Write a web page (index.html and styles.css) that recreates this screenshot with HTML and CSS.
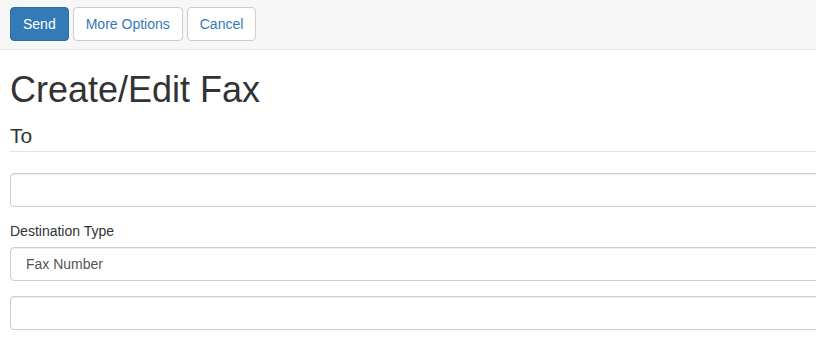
FILE: index.html
```html
<!DOCTYPE html>
<html lang="en">
<head>
    <meta charset="UTF-8">
    <meta name="viewport" content="width=device-width, initial-scale=1.0">
    <title>Create/Edit Fax</title>
    <link rel="stylesheet" href="styles.css">
</head>
<body>
    <div class="toolbar">
        <button class="btn btn-primary">Send</button>
        <button class="btn btn-default">More Options</button>
        <button class="btn btn-default">Cancel</button>
    </div>
    <div class="content">
        <h1>Create/Edit Fax</h1>
        <form class="fax-form">
            <fieldset>
                <legend>To</legend>
                <div class="form-group">
                    <input type="text" class="form-control" aria-label="Recipient">
                </div>
                <div class="form-group">
                    <label for="destType">Destination Type</label>
                    <select id="destType" class="form-control">
                        <option>Fax Number</option>
                    </select>
                </div>
                <div class="form-group">
                    <input type="text" class="form-control" aria-label="Fax number">
                </div>
            </fieldset>
        </form>
    </div>
</body>
</html>
```

FILE: styles.css
```css
html, body {
    overflow: hidden;
}
body {
    margin: 0;
    font-family: "Liberation Sans", Arial, sans-serif;
    font-size: 14px;
    line-height: 1.42857;
    color: #333;
    background-color: #fff;
}
.toolbar {
    display: flex;
    gap: 4px;
    padding: 7px 10px 8px;
    background-color: #f7f7f7;
    border-bottom: 1px solid #e7e7e7;
}
.btn {
    font-family: inherit;
    font-size: 14px;
    line-height: 20px;
    padding: 6px 12px;
    border: 1px solid transparent;
    border-radius: 4px;
    cursor: pointer;
}
.btn-primary {
    color: #fff;
    background-color: #337ab7;
    border-color: #2e6da4;
}
.btn-default {
    color: #337ab7;
    background-color: #fff;
    border-color: #ccc;
}
.content {
    width: 900px;
    padding: 0 10px;
}
h1 {
    font-size: 36px;
    font-weight: 500;
    line-height: 1.1;
    margin: 20px 0 11px;
}
fieldset {
    margin: 0;
    padding: 0;
    border: 0;
}
legend {
    display: block;
    width: 100%;
    padding: 0;
    margin-bottom: 21px;
    font-size: 21px;
    line-height: 30px;
    border-bottom: 1px solid #e5e5e5;
}
.form-group {
    margin-bottom: 15px;
}
label {
    display: block;
    margin-bottom: 5px;
    font-weight: normal;
}
.form-control {
    display: block;
    box-sizing: border-box;
    width: 100%;
    height: 34px;
    padding: 6px 12px;
    font-family: inherit;
    font-size: 14px;
    line-height: 20px;
    color: #555;
    background-color: #fff;
    border: 1px solid #ccc;
    border-radius: 4px;
    box-shadow: inset 0 1px 1px rgba(0,0,0,0.075);
}
select.form-control {
    appearance: none;
    -webkit-appearance: none;
    padding-left: 15px;
}
```
